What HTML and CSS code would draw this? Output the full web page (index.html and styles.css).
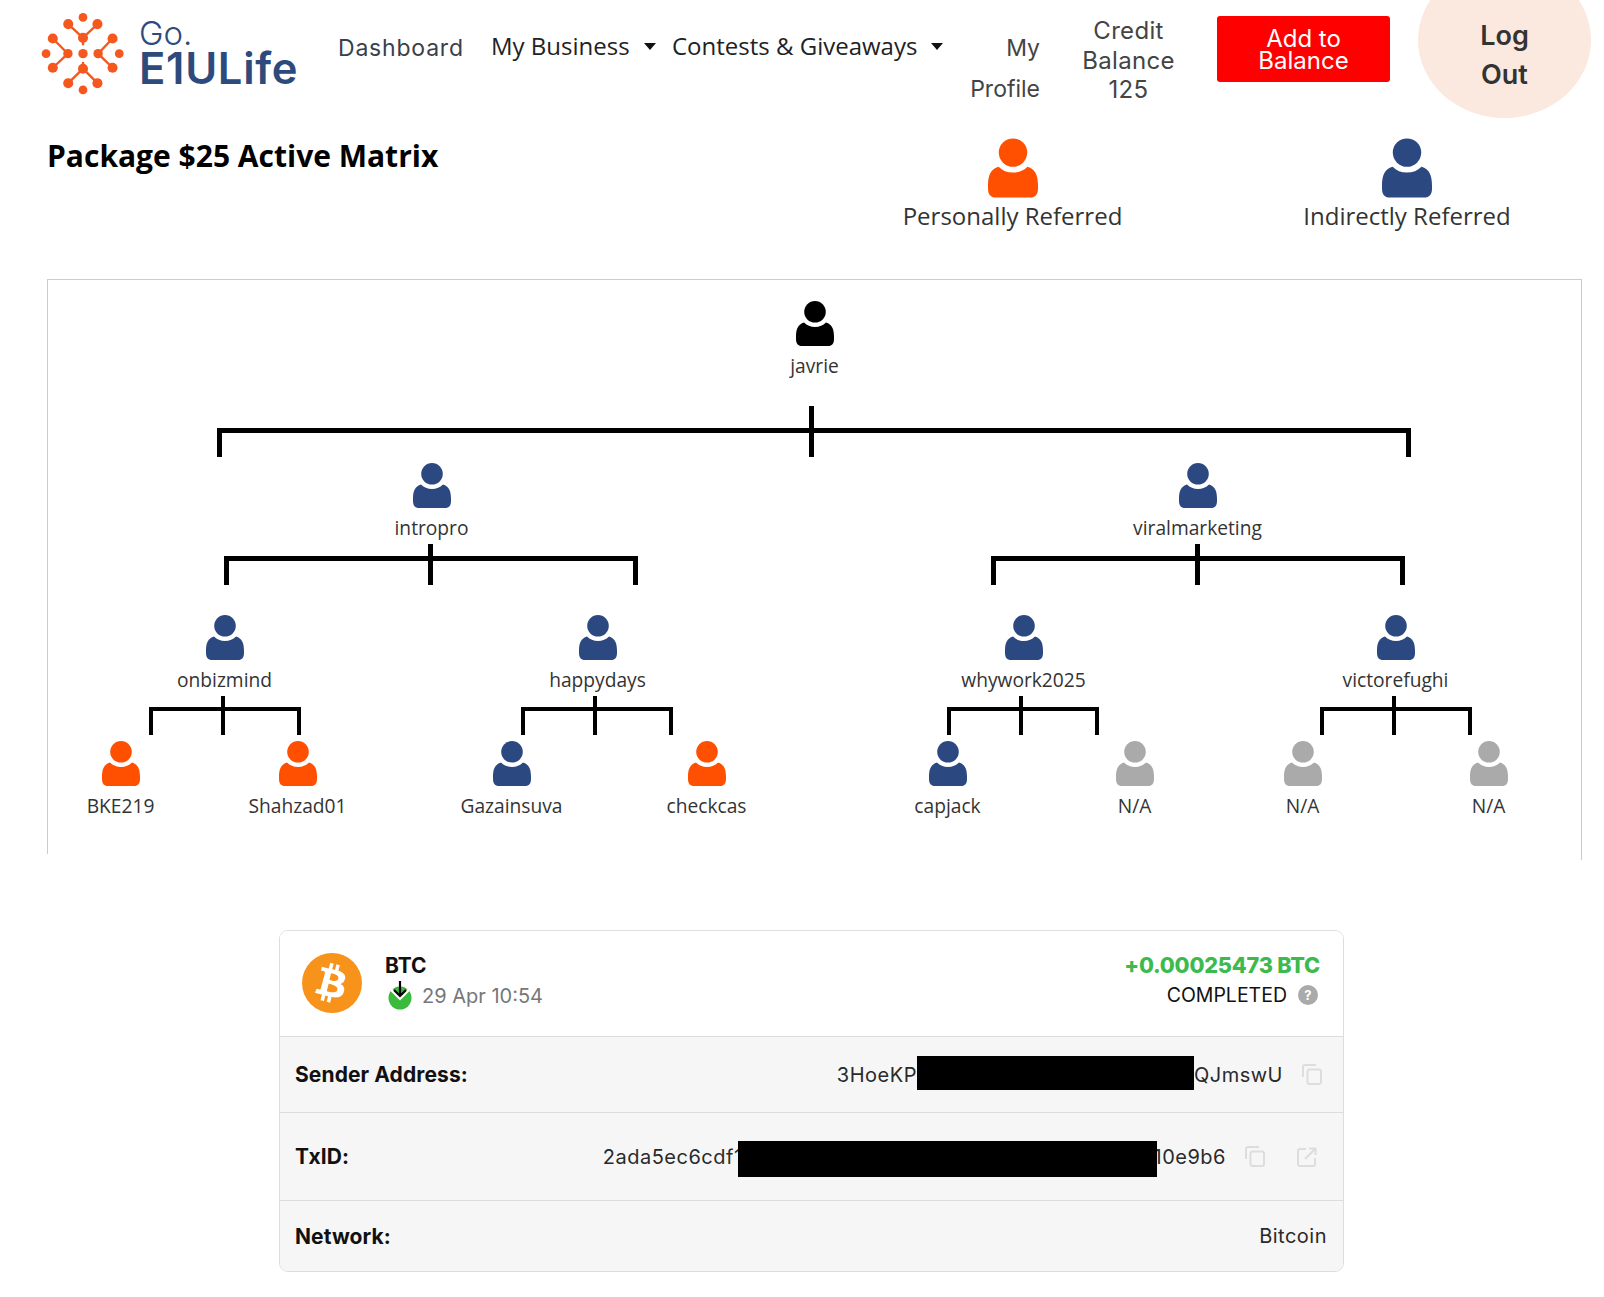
FILE: index.html
```html
<!DOCTYPE html>
<html lang="en">
<head>
<meta charset="utf-8">
<title>Package $25 Active Matrix</title>
<link rel="stylesheet" href="styles.css">
</head>
<body>
<svg class="defs" width="0" height="0" aria-hidden="true">
  <symbol id="person" viewBox="0 0 38 45">
    <path d="M0 36C0 28 2 23.500 8 21.600C11 24.600 14.500 26 19 26C23.500 26 27 24.600 30 21.600C36 23.500 38 28 38 36V38C38 42.500 36 45 32 45H6C2 45 0 42.500 0 38Z"/>
    <circle cx="19" cy="10.800" r="10.800"/>
  </symbol>
  <symbol id="copy" viewBox="0 0 20 21">
    <path d="M1 13V3Q1 1 3 1H14" fill="none" stroke="currentColor" stroke-width="2"/>
    <rect x="5.500" y="5.500" width="13.500" height="14.500" rx="2" fill="none" stroke="currentColor" stroke-width="2"/>
  </symbol>
</svg>

<header class="topbar">
  <a class="logo" href="#">
    <svg class="logo-mark" viewBox="20 20 280 280" width="94" height="94" aria-hidden="true">
      <g class="logo-links">
        <path d="M116 62L160 103L203 62M160 103V125M70 105L115 150L70 192M248 105L205 150L248 192M116 238L160 195L203 238M160 195V175"/>
      </g>
      <g class="logo-dots">
        <circle cx="160" cy="42" r="13"/><circle cx="116" cy="62" r="15"/><circle cx="203" cy="62" r="15"/><circle cx="160" cy="103" r="15"/>
        <circle cx="50" cy="150" r="13"/><circle cx="115" cy="150" r="14"/><circle cx="160" cy="150" r="14"/><circle cx="205" cy="150" r="14"/><circle cx="268" cy="150" r="13"/>
        <circle cx="70" cy="105" r="15"/><circle cx="70" cy="192" r="15"/><circle cx="248" cy="105" r="15"/><circle cx="248" cy="192" r="15"/>
        <circle cx="160" cy="195" r="15"/><circle cx="116" cy="238" r="15"/><circle cx="203" cy="238" r="15"/><circle cx="160" cy="258" r="13"/>
      </g>
    </svg>
    <span class="logo-text"><span class="logo-go">Go.</span><span class="logo-name">E1ULife</span></span>
  </a>
  <a class="nav-plain" href="#">Dashboard</a>
  <a class="nav-drop" href="#">My Business<span class="caret"></span></a>
  <a class="nav-drop" href="#">Contests &amp; Giveaways<span class="caret"></span></a>
  <a class="nav-profile" href="#">My<br>Profile</a>
  <a class="nav-credit" href="#">Credit<br>Balance<br>125</a>
  <a class="add-btn" href="#">Add to<br>Balance</a>
  <a class="logout" href="#">Log<br>Out</a>
</header>

<section class="title-row">
  <h1 class="page-title">Package $25 Active Matrix</h1>
  <div class="legend-item">
    <svg class="legend-icon personal"><use href="#person"/></svg>
    <span>Personally Referred</span>
  </div>
  <div class="legend-item">
    <svg class="legend-icon indirect"><use href="#person"/></svg>
    <span>Indirectly Referred</span>
  </div>
</section>

<section class="tree">
  <div class="bracket b1"></div>
  <div class="bracket b2 b2-left"></div>
  <div class="bracket b2 b2-right"></div>
  <div class="bracket b3 b3-a"></div>
  <div class="bracket b3 b3-b"></div>
  <div class="bracket b3 b3-c"></div>
  <div class="bracket b3 b3-d"></div>

  <div class="node n-javrie"><svg class="root"><use href="#person"/></svg><span>javrie</span></div>
  <div class="node n-intropro"><svg class="indirect"><use href="#person"/></svg><span>intropro</span></div>
  <div class="node n-viral"><svg class="indirect"><use href="#person"/></svg><span>viralmarketing</span></div>
  <div class="node l3 n-onbiz"><svg class="indirect"><use href="#person"/></svg><span>onbizmind</span></div>
  <div class="node l3 n-happy"><svg class="indirect"><use href="#person"/></svg><span>happydays</span></div>
  <div class="node l3 n-why"><svg class="indirect"><use href="#person"/></svg><span>whywork2025</span></div>
  <div class="node l3 n-victor"><svg class="indirect"><use href="#person"/></svg><span>victorefughi</span></div>
  <div class="node l4 n-bke"><svg class="personal"><use href="#person"/></svg><span>BKE219</span></div>
  <div class="node l4 n-shah"><svg class="personal"><use href="#person"/></svg><span>Shahzad01</span></div>
  <div class="node l4 n-gaza"><svg class="indirect"><use href="#person"/></svg><span>Gazainsuva</span></div>
  <div class="node l4 n-check"><svg class="personal"><use href="#person"/></svg><span>checkcas</span></div>
  <div class="node l4 n-cap"><svg class="indirect"><use href="#person"/></svg><span>capjack</span></div>
  <div class="node l4 n-na1"><svg class="empty"><use href="#person"/></svg><span>N/A</span></div>
  <div class="node l4 n-na2"><svg class="empty"><use href="#person"/></svg><span>N/A</span></div>
  <div class="node l4 n-na3"><svg class="empty"><use href="#person"/></svg><span>N/A</span></div>
</section>

<section class="tx-card">
  <div class="tx-head">
    <svg class="btc-logo" viewBox="0 0 64 64" width="60" height="60" aria-hidden="true">
      <circle cx="32" cy="32" r="32" fill="#f7931a"/>
      <path fill="#fff" fill-rule="evenodd" d="M46.100 27.400c.7-4.400-2.700-6.800-7.300-8.400l1.500-6-3.600-.9-1.500 5.900c-1-.2-1.900-.5-2.900-.7l1.500-5.900-3.700-.9-1.500 6c-.8-.2-1.600-.4-2.400-.5l-5.100-1.300-1 3.900s2.700.6 2.700.7c1.500.4 1.700 1.400 1.700 2.100l-4.500 16.600c-.2.500-.6 1.100-1.700.9 0 .1-2.700-.7-2.700-.7l-1.800 4.200 4.800 1.200c.9.2 1.800.5 2.600.7l-1.500 6.100 3.700.9 1.500-6c1 .3 2 .5 2.900.8l-1.500 6 3.700.9 1.500-6.100c6.300 1.200 11 .7 13-5 1.600-4.600-.1-7.200-3.400-8.900 2.400-.6 4.200-2.200 4.700-5.500zm-8.400 11.800c-1.100 4.600-8.800 2.100-11.300 1.500l2-8c2.500.6 10.500 1.900 9.300 6.500zm1.100-11.900c-1 4.200-7.500 2.100-9.600 1.500l1.800-7.300c2.100.5 8.900 1.500 7.800 5.800z"/>
    </svg>
    <div class="tx-coin">
      <strong class="tx-symbol">BTC</strong>
      <div class="tx-date">
        <svg class="tx-dir" viewBox="0 0 24 30" width="24" height="30" aria-hidden="true">
          <circle cx="12" cy="18" r="11.500" fill="#3cba3c"/>
          <path d="M3.500 10L12 18.500L20.500 10" fill="none" stroke="#fff" stroke-width="3"/>
          <path d="M12 1V15.500M6 10L12 16L18 10" fill="none" stroke="#000" stroke-width="2.200"/>
        </svg>
        <span>29 Apr 10:54</span>
      </div>
    </div>
    <div class="tx-status">
      <strong class="tx-amount">+0.00025473 BTC</strong>
      <div class="tx-state"><span>COMPLETED</span><span class="help">?</span></div>
    </div>
  </div>
  <div class="tx-row row-sender">
    <strong>Sender Address:</strong>
    <div class="tx-value">
      <span>3HoeKP</span><span class="redact redact-sender"></span><span>QJmswU</span>
      <svg class="tx-icon copy-sender"><use href="#copy"/></svg>
    </div>
  </div>
  <div class="tx-row row-txid">
    <strong>TxID:</strong>
    <div class="tx-value">
      <span>2ada5ec6cdf1</span><span class="redact redact-txid"></span><span>10e9b6</span>
      <svg class="tx-icon copy-txid"><use href="#copy"/></svg>
      <svg class="tx-icon open-txid" viewBox="0 0 20 20" aria-hidden="true">
        <path d="M9 2H3Q1 2 1 4V17Q1 19 3 19H16Q18 19 18 17V11M8 12L18.500 1.500M12 1.500H18.500V8" fill="none" stroke="currentColor" stroke-width="2"/>
      </svg>
    </div>
  </div>
  <div class="tx-row row-network">
    <strong>Network:</strong>
    <div class="tx-value"><span>Bitcoin</span></div>
  </div>
</section>
</body>
</html>
```

FILE: styles.css
```css
* { box-sizing: border-box; }
html, body { margin: 0; padding: 0; }
body { background: #fff; font-family: "Open Sans", sans-serif; color: #333; overflow-x: hidden; }
a { color: inherit; text-decoration: none; }
.defs { position: absolute; }

/* header */
.topbar {
  height: 118px;
  display: grid;
  grid-template-columns: 338px 153px 181px 298px 70px 177px 173px 201px;
  align-items: start;
  font-family: Inter, sans-serif;
}
.logo { display: flex; margin: 10px 0 0 36px; }
.logo-links path { fill: none; stroke: #f4581e; stroke-width: 7; }
.logo-dots { fill: #f4581e; }
.logo-text { display: flex; flex-direction: column; margin-left: 9px; color: #2d4a7c; }
.logo-go { font-size: 33px; line-height: 30px; margin-top: 8px; font-weight: 300; }
.logo-name { font-size: 43.500px; line-height: 36px; margin-top: 2px; font-weight: 600; letter-spacing: 0.7px; }
.nav-plain { font-size: 23px; line-height: 30px; margin-top: 33px; color: #3a3f4a; letter-spacing: 0.8px; }
.nav-drop {
  display: flex; align-items: center;
  font-family: "Open Sans", sans-serif; font-size: 24px; line-height: 32px;
  margin-top: 30px; color: #222;
}
.caret {
  width: 0; height: 0; margin-left: 14px;
  border-left: 6.500px solid transparent; border-right: 6.500px solid transparent; border-top: 7px solid #111;
}
.nav-profile { font-size: 23px; line-height: 40.500px; margin-top: 28px; text-align: right; color: #444; }
.nav-credit { font-size: 24px; line-height: 29.500px; margin-top: 16px; text-align: center; color: #444; letter-spacing: 0.3px; }
.add-btn {
  height: 66px; margin-top: 16px; padding-top: 2px; display: flex; align-items: center; justify-content: center;
  text-align: center; font-size: 24px; line-height: 22px; color: #fff; background: #fe0000; border-radius: 3px;
}
.logout {
  width: 173px; height: 156px; margin: -38px 0 0 28px; padding-top: 30px;
  display: flex; align-items: center; justify-content: center; text-align: center;
  background: #fbe9df; border-radius: 50%;
  font-size: 27px; line-height: 39px; font-weight: 600; color: #333;
}

/* title + legend */
.title-row { height: 161px; display: grid; grid-template-columns: 815px 395px 394px; padding-top: 20px; }
.page-title { margin: -2px 0 0; padding-left: 47px; font-size: 30px; line-height: 40px; font-weight: 700; color: #000; }
.legend-item { display: flex; flex-direction: column; align-items: center; font-size: 24px; line-height: 30px; color: #333; }
.legend-icon { width: 50px; height: 60px; margin-bottom: 3px; }
.personal { fill: #fe5000; }
.indirect { fill: #2b4880; }
.root { fill: #000; }
.empty { fill: #aaa; }

/* tree: a free canvas of nodes and connectors */
.tree {
  position: relative; width: 1535px; height: 575px; margin-left: 47px;
  border: 1px solid #ccc; border-bottom: 0;
}
.tree::after { content: ""; position: absolute; right: -1px; top: 100%; width: 1px; height: 6px; background: #ccc; }
.bracket { position: absolute; border-style: solid; border-color: #000; border-bottom: 0; }
.bracket::after { content: ""; position: absolute; background: #000; }
.b1 { left: 169px; top: 148px; width: 1194px; height: 29px; border-width: 5px 5px 0; }
.b1::after { left: 587px; top: -27px; width: 5px; height: 51px; }
.b2 { top: 276px; width: 414px; height: 29px; border-width: 5px 5px 0; }
.b2::after { left: 199px; top: -17px; width: 5px; height: 41px; }
.b2-left { left: 176px; }
.b2-right { left: 943px; }
.b3 { top: 427px; width: 152px; height: 28px; border-width: 4px 4px 0; }
.b3::after { left: 68px; top: -15px; width: 4px; height: 39px; }
.b3-a { left: 101px; }
.b3-b { left: 473px; }
.b3-c { left: 899px; }
.b3-d { left: 1272px; }

.node {
  position: absolute; width: 200px; margin-left: -100px;
  display: flex; flex-direction: column; align-items: center;
  font-size: 19.200px; line-height: 26px; color: #333;
}
.node svg { width: 38px; height: 45px; margin-bottom: 7px; }
.l3 { top: 335px; }
.l4 { top: 461px; }
.n-javrie { left: 766.500px; top: 21px; }
.n-intropro { left: 383.500px; top: 183px; }
.n-viral { left: 1149.500px; top: 183px; }
.n-onbiz { left: 176.500px; }
.n-happy { left: 549.500px; }
.n-why { left: 975.500px; }
.n-victor { left: 1347.500px; }
.n-bke { left: 72.500px; }
.n-shah { left: 249.500px; }
.n-gaza { left: 463.500px; }
.n-check { left: 658.500px; }
.n-cap { left: 899.500px; }
.n-na1 { left: 1086.500px; }
.n-na2 { left: 1254.500px; }
.n-na3 { left: 1440.500px; }

/* transaction card */
.tx-card {
  width: 1065px; margin: 76px 0 25px 279px;
  border: 1px solid #ddd; border-radius: 9px; overflow: hidden;
  font-family: Inter, sans-serif; font-size: 20px; color: #222;
}
.tx-head { height: 105px; display: flex; align-items: center; padding: 0 23px 0 22px; background: #fff; }
.btc-logo { flex: none; margin-bottom: 2px; }
.tx-coin { margin-left: 23px; padding-bottom: 5px; }
.tx-symbol { display: block; font-size: 21px; line-height: 26px; font-weight: 700; color: #111; }
.tx-date { display: flex; align-items: flex-end; height: 31px; color: #777; }
.tx-dir { margin: 0 10px 0 3px; }
.tx-date span { line-height: 28px; }
.tx-status { margin-left: auto; display: flex; flex-direction: column; align-items: flex-end; padding-bottom: 7px; }
.tx-amount { font-size: 21.700px; line-height: 26px; font-weight: 800; color: #3dba4e; letter-spacing: -0.2px; }
.tx-state { display: flex; align-items: center; margin-top: 4px; font-size: 19.500px; line-height: 26px; color: #111; }
.help {
  width: 20px; height: 20px; margin: 0 2px 0 11px; border-radius: 50%;
  background: #aaa; color: #fff; font-size: 13px; line-height: 20px; font-weight: 700; text-align: center;
}
.tx-row {
  display: flex; align-items: center; justify-content: space-between;
  padding: 0 16px 0 15px; border-top: 1px solid #ddd; background: #f6f6f6;
}
.tx-row strong { font-size: 21px; font-weight: 700; color: #111; letter-spacing: 0.1px; }
.row-sender { height: 76px; }
.row-txid { height: 88px; }
.row-network { height: 71px; }
.tx-value { display: flex; align-items: center; line-height: 26px; color: #2a2a2a; letter-spacing: 0.5px; }
.redact { position: relative; background: #000; }
.redact-sender { width: 277px; height: 34px; top: -2px; }
.redact-txid { width: 419px; height: 36px; margin: 0 -3px 0 -5px; top: 2px; }
.tx-icon { width: 20px; height: 21px; color: #ddd; flex: none; }
.copy-sender { margin: 0 5px 0 19px; }
.copy-txid { margin: 0 0 0 19px; }
.open-txid { margin: 0 10px 0 32px; height: 20px; }
```
